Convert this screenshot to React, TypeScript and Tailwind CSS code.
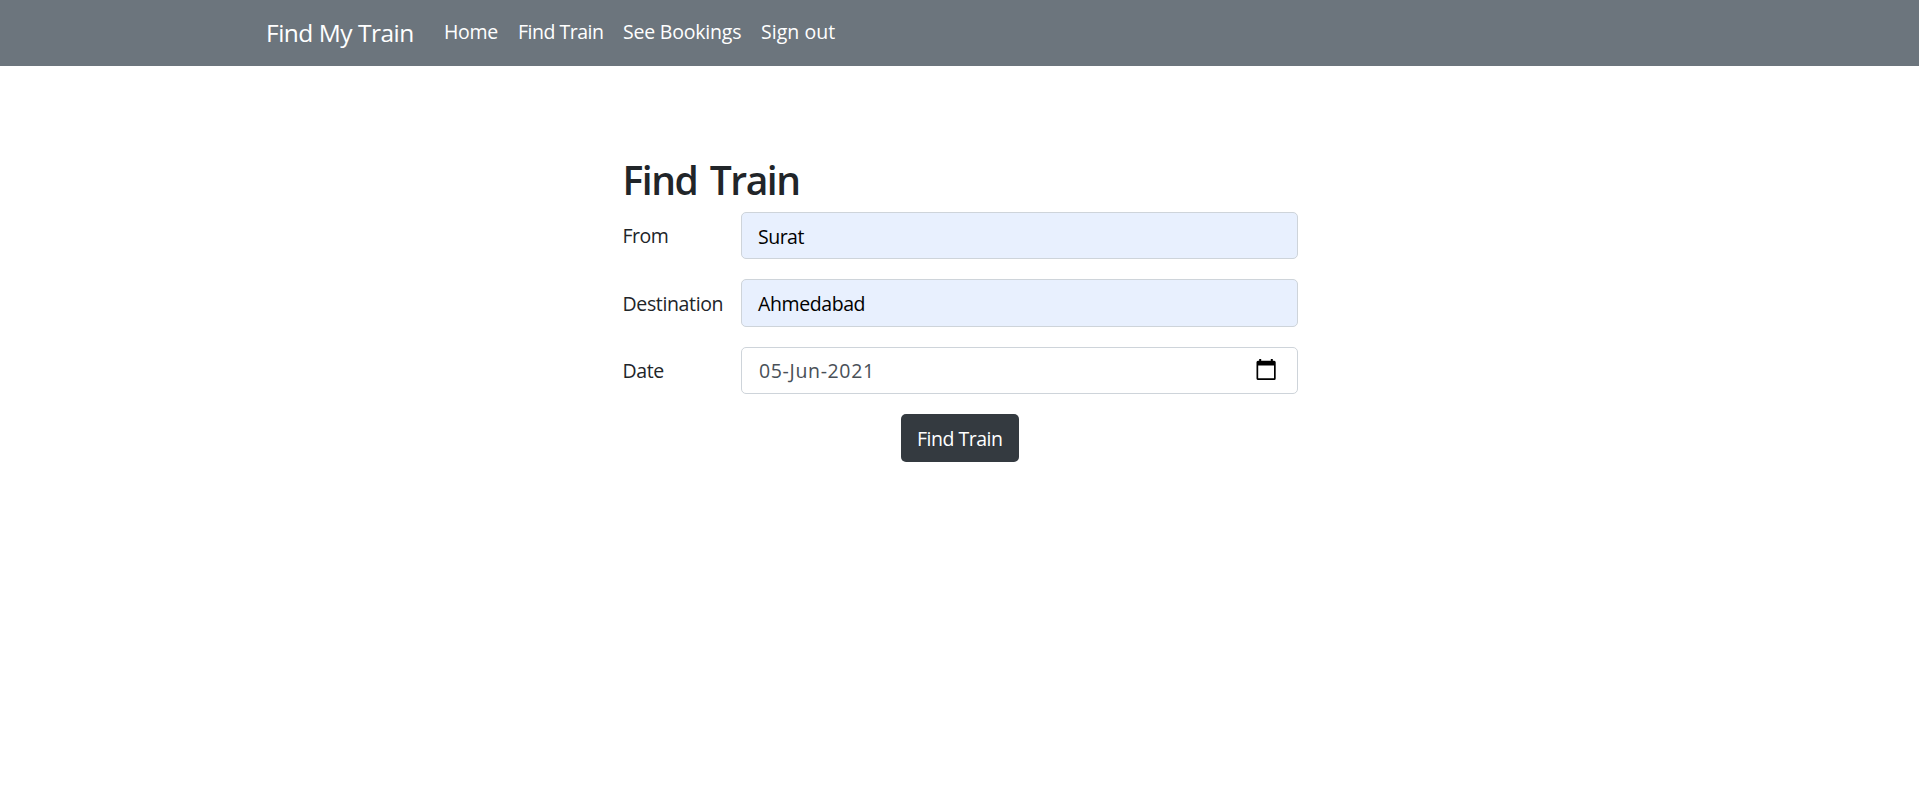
import React from 'react';

const links = [
  { label: 'Home', cls: 'w-[54px] tracking-[-0.3px]' },
  { label: 'Find Train', cls: 'w-[85px] tracking-[-0.5px]' },
  { label: 'See Bookings', cls: 'w-[118px] tracking-[-0.2px]' },
  { label: 'Sign out', cls: 'w-[76px] tracking-[0.05px]' },
];

function CalendarIcon() {
  return (
    <svg width="20" height="22" viewBox="0 0 20 22" fill="none" aria-hidden="true">
      <path d="M3.200 0h2v1.700h9.600V0h2v1.700h1.400Q19.700 1.700 19.700 3.200v16.200q0 1.500-1.500 1.500h-16Q.5 20.900 .5 19.400v-16.200Q.5 1.700 2 1.700h1.200ZM2.200 6.400V19.300h15.800V6.400Z" fill="#000" fillRule="evenodd" />
    </svg>
  );
}

function Field({ label, labelCls, boxCls, children }: { label: string; labelCls: string; boxCls: string; children: React.ReactNode }) {
  return (
    <div className="flex">
      <label className={`w-[118.5px] shrink-0 whitespace-nowrap text-[19.5px] leading-[27px] ${labelCls}`}>{label}</label>
      <div className={`flex w-[557px] justify-between rounded-[5px] border border-[#ced4da] pl-4 pr-[21px] text-[19.5px] ${boxCls}`}>{children}</div>
    </div>
  );
}

export default function App() {
  return (
    <div className="min-h-[792px] bg-white font-['Open_Sans','Noto_Sans',sans-serif] text-[#212529]">
      <nav className="flex h-[66px] bg-[#6c757d] pl-[266px] text-white">
        <a href="#" className="w-[178px] whitespace-nowrap pt-[17px] text-[24.5px] leading-8 tracking-[-0.5px]">Find My Train</a>
        <ul className="flex gap-5 pt-[18px] text-[19.5px] leading-7">
          {links.map((l) => (
            <li key={l.label} className={`whitespace-nowrap ${l.cls}`}><a href="#">{l.label}</a></li>
          ))}
        </ul>
      </nav>
      <main className="ml-[622.5px] w-[676px] pt-[90px]">
        <h1 className="h-[56px] whitespace-nowrap text-[39px] font-semibold leading-[48px] tracking-[-1.5px] [word-spacing:4px]">Find Train</h1>
        <form className="flex flex-col">
          <div className="h-[67px]">
            <Field label="From" labelCls="pt-[10px] tracking-[-0.5px]" boxCls="h-[47px] bg-[#e8f0fe] text-black">
              <span className="pt-[10px] leading-7 tracking-[-0.5px]">Surat</span>
            </Field>
          </div>
          <div className="h-[68px]">
            <Field label="Destination" labelCls="pt-[11px] tracking-[-0.36px]" boxCls="h-[48px] bg-[#e8f0fe] text-black">
              <span className="pt-[10px] leading-7 tracking-[-0.4px]">Ahmedabad</span>
            </Field>
          </div>
          <div className="h-[67px]">
            <Field label="Date" labelCls="pt-[10px] tracking-[-0.4px]" boxCls="h-[47px] bg-white text-[#495057]">
              <span className="pl-px pt-[9px] leading-7 tracking-[0.65px]">05-Jun-2021</span>
              <span className="pt-[11px]"><CalendarIcon /></span>
            </Field>
          </div>
          <button type="button" className="ml-[278.5px] flex h-12 w-[118px] whitespace-nowrap rounded-[5px] bg-[#343a40] pl-4 pt-[11px] text-[19.5px] leading-7 tracking-[-0.5px] text-white">Find Train</button>
        </form>
      </main>
    </div>
  );
}
